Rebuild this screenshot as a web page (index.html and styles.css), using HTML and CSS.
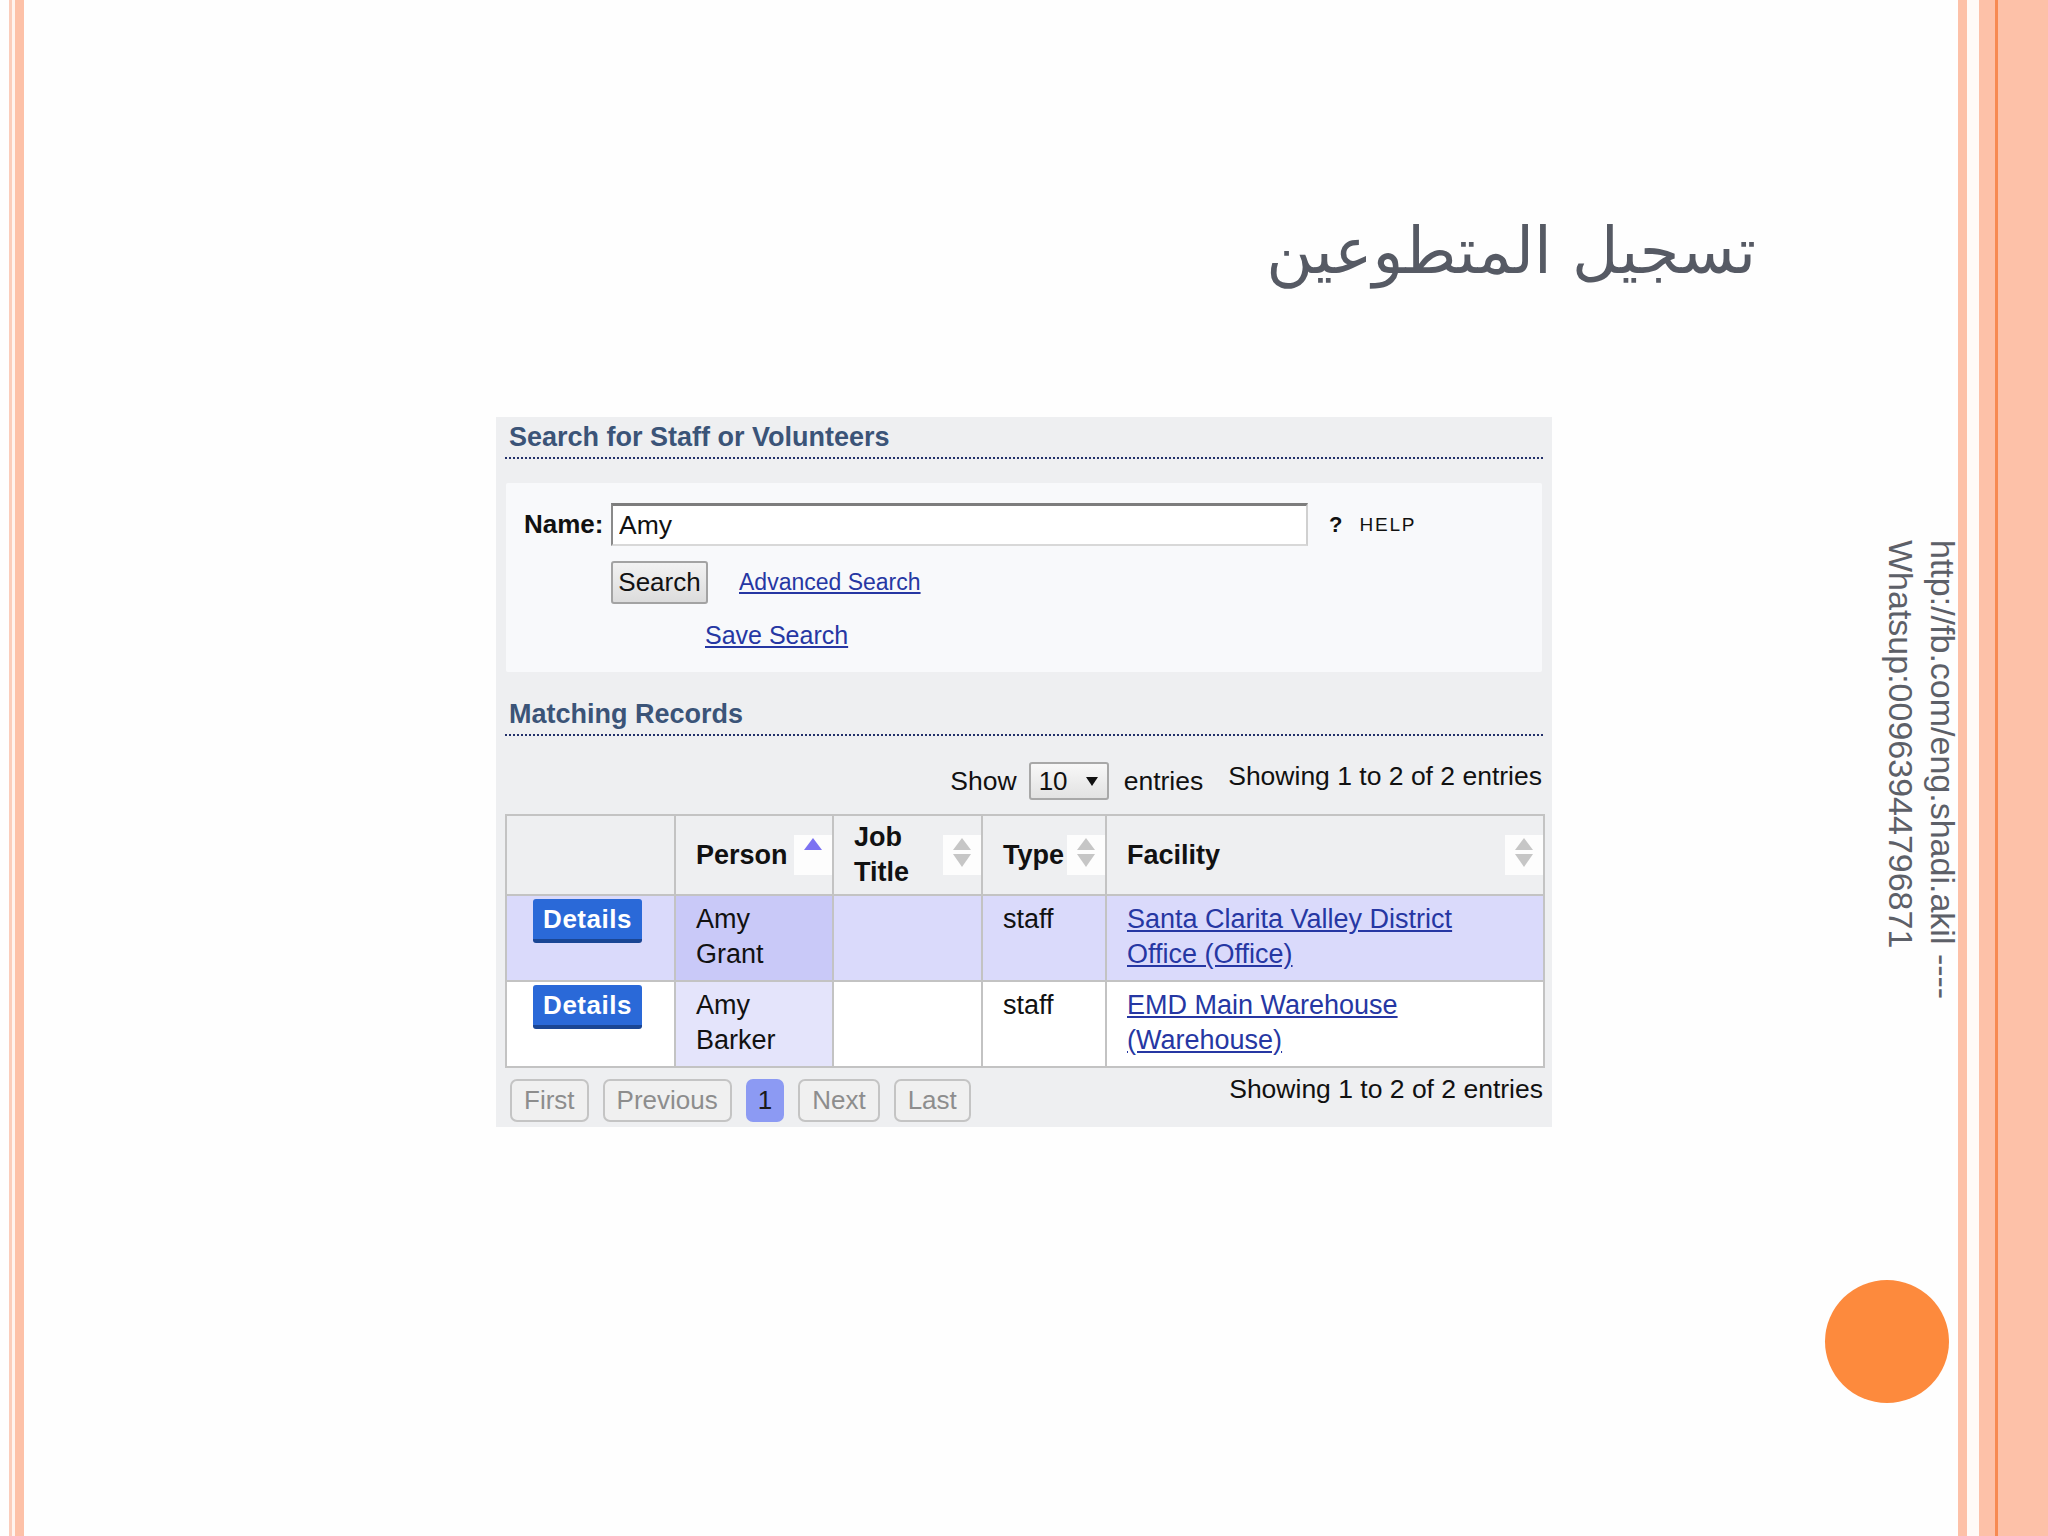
FILE: index.html
```html
<!DOCTYPE html>
<html lang="en">
<head>
<meta charset="utf-8">
<title>تسجيل المتطوعين</title>
<link rel="stylesheet" href="styles.css">
</head>
<body>
<div class="slide">
  <div class="deco-left"></div>
  <main class="content">
    <h1 class="title" dir="rtl" lang="ar">تسجيل المتطوعين</h1>
    <section class="panel">
      <h2 class="sec-head">Search for Staff or Volunteers</h2>
      <div class="search-box">
        <div class="row-name">
          <label class="name-label" for="name">Name:</label>
          <input class="name-input" id="name" type="text" value="Amy">
          <span class="help"><b class="help-q">?</b><span class="help-t">HELP</span></span>
        </div>
        <div class="row-actions">
          <button class="btn-search" type="button">Search</button>
          <a class="link adv" href="#">Advanced Search</a>
        </div>
        <div class="row-save"><a class="link save" href="#">Save Search</a></div>
      </div>

      <h2 class="sec-head">Matching Records</h2>
      <div class="table-tools">
        <span class="show-label">Show</span>
        <span class="select">10 <svg class="caret" width="12" height="9" viewBox="0 0 12 9"><polygon points="0,0 12,0 6,9" fill="#111"/></svg></span>
        <span class="entries-label">entries</span>
        <span class="info info-top">Showing 1 to 2 of 2 entries</span>
      </div>

      <table class="records">
        <colgroup>
          <col class="c1"><col class="c2"><col class="c3"><col class="c4"><col class="c5">
        </colgroup>
        <thead>
          <tr>
            <th></th>
            <th><div class="th-in"><span class="th-text nowrap">Person</span><span class="sort"><svg width="20" height="32" viewBox="0 0 20 32"><polygon points="10,1 19,13 1,13" fill="#7c72f2"/></svg></span></div></th>
            <th><div class="th-in"><span class="th-text">Job Title</span><span class="sort"><svg width="20" height="32" viewBox="0 0 20 32"><polygon points="10,1 19,13 1,13" fill="#c6c6c6"/><polygon points="1,17 19,17 10,30" fill="#c6c6c6"/></svg></span></div></th>
            <th><div class="th-in"><span class="th-text nowrap">Type</span><span class="sort"><svg width="20" height="32" viewBox="0 0 20 32"><polygon points="10,1 19,13 1,13" fill="#c6c6c6"/><polygon points="1,17 19,17 10,30" fill="#c6c6c6"/></svg></span></div></th>
            <th><div class="th-in"><span class="th-text nowrap">Facility</span><span class="sort"><svg width="20" height="32" viewBox="0 0 20 32"><polygon points="10,1 19,13 1,13" fill="#c6c6c6"/><polygon points="1,17 19,17 10,30" fill="#c6c6c6"/></svg></span></div></th>
          </tr>
        </thead>
        <tbody>
          <tr class="r1">
            <td class="act"><span class="btn-details">Details</span></td>
            <td class="sorted">Amy Grant</td>
            <td></td>
            <td>staff</td>
            <td><a class="link" href="#">Santa Clarita Valley District Office (Office)</a></td>
          </tr>
          <tr class="r2">
            <td class="act"><span class="btn-details">Details</span></td>
            <td class="sorted">Amy Barker</td>
            <td></td>
            <td>staff</td>
            <td><a class="link" href="#">EMD Main Warehouse (Warehouse)</a></td>
          </tr>
        </tbody>
      </table>

      <div class="pager">
        <span class="pg">First</span>
        <span class="pg">Previous</span>
        <span class="pg current">1</span>
        <span class="pg">Next</span>
        <span class="pg">Last</span>
        <span class="info info-bottom">Showing 1 to 2 of 2 entries</span>
      </div>
    </section>
  </main>
  <div class="deco-right"></div>
</div>
<div class="side-note">http://fb.com/eng.shadi.akil ----<br>Whatsup:00963944796871</div>
<div class="dot"></div>
</body>
</html>
```
FILE: styles.css
```css
html, body {
  margin: 0;
  padding: 0;
}
body {
  width: 2048px;
  height: 1536px;
  background: #fefefe;
  font-family: "Liberation Sans", Arial, sans-serif;
  overflow: hidden;
  position: relative;
}
.slide {
  display: flex;
  width: 2048px;
  height: 1536px;
}
.deco-left {
  width: 24px;
  flex: none;
  background: linear-gradient(to right,
    #fefefe 0 9px,
    #fbcdbb 9px 12px,
    #fff3ee 12px 15px,
    #fdc1a8 15px 24px);
}
.deco-right {
  width: 90px;
  flex: none;
  background: linear-gradient(to right,
    #fdc1a8 0 9px,
    #fffaf7 9px 21px,
    #fdc1a8 21px 37px,
    #f78a52 37px 40px,
    #fdc1a8 40px 90px);
}
.content {
  flex: 1;
  min-width: 0;
}
.title {
  margin: 0;
  height: 417px;
  box-sizing: border-box;
  padding: 206px 202px 0 0;
  text-align: right;
  font-family: "DejaVu Sans", "Noto Sans", sans-serif;
  font-weight: normal;
  font-size: 64px;
  line-height: 90px;
  color: #565a64;
}

/* ---------- panel ---------- */
.panel {
  margin-left: 472px;
  width: 1056px;
  box-sizing: border-box;
  background: #eeeff1;
  padding: 0 9px 5px 9px;
}
.sec-head {
  margin: 0;
  padding: 4px 0 4px 4px;
  font-size: 27px;
  line-height: 32px;
  font-weight: bold;
  color: #3b5478;
  border-bottom: 2px dotted #22306a;
}
.search-box {
  margin: 24px 1px 0 1px;
  background: #f8f9fb;
  border-radius: 2px;
  padding: 20px 0 19px 18px;
}
.row-name {
  display: flex;
  align-items: center;
}
.name-label {
  font-weight: bold;
  font-size: 26px;
  color: #111;
  width: 87px;
}
.name-input {
  width: 697px;
  height: 43px;
  box-sizing: border-box;
  margin: 0;
  border-style: solid;
  border-width: 3px 2px 2px 2px;
  border-color: #7d7d7d #d0d0d0 #d8d8d8 #8a8a8a;
  background: #fff;
  padding: 0 6px;
  font-family: "Liberation Sans", Arial, sans-serif;
  font-size: 26.5px;
  color: #111;
  outline: none;
}
.help {
  margin-left: 21px;
  display: flex;
  align-items: center;
  color: #111;
}
.help-q {
  font-size: 22px;
  font-weight: bold;
}
.help-t {
  margin-left: 17px;
  font-size: 19px;
  letter-spacing: 1.8px;
}
.row-actions {
  display: flex;
  align-items: center;
  margin-top: 15px;
  padding-left: 87px;
}
.btn-search {
  width: 97px;
  height: 43px;
  box-sizing: border-box;
  border: 2px solid #a3a3a3;
  border-radius: 3px;
  background: linear-gradient(#f2f2f2, #dcdcdc);
  font-family: "Liberation Sans", Arial, sans-serif;
  font-size: 26px;
  color: #111;
  padding: 0;
}
.link {
  color: #2637a3;
  text-decoration: underline;
}
.adv {
  margin-left: 31px;
  font-size: 23px;
}
.row-save {
  margin-top: 17px;
  padding-left: 181px;
  line-height: 28px;
}
.save {
  font-size: 25px;
}

/* ---------- table tools ---------- */
.search-box + .sec-head {
  margin-top: 22px;
}
.table-tools {
  display: flex;
  align-items: center;
  justify-content: flex-end;
  margin-top: 26px;
  padding-right: 1px;
  font-size: 26.5px;
  color: #111;
}
.select {
  margin-left: 12px;
  width: 80px;
  height: 38px;
  box-sizing: border-box;
  border: 2px solid #a8a8a8;
  border-radius: 3px;
  background: linear-gradient(#f8f8f8, #e2e2e2);
  display: flex;
  align-items: center;
  padding-left: 8px;
  font-size: 26px;
}
.caret {
  margin-left: 18px;
}
.entries-label {
  margin-left: 15px;
}
.info {
  font-size: 26.5px;
  color: #111;
  line-height: 28px;
  align-self: flex-start;
}
.info-top {
  margin-left: 25px;
}

/* ---------- table ---------- */
.records {
  margin-top: 14px;
  width: 1038px;
  table-layout: fixed;
  border-collapse: collapse;
  border: 2px solid #c3c3c3;
  font-size: 27px;
  color: #111;
}
.c1 { width: 169px; }
.c2 { width: 158px; }
.c3 { width: 149px; }
.c4 { width: 124px; }
.c5 { width: 438px; }
.records th {
  height: 78px;
  padding: 0 0 0 20px;
  border: 2px solid #c3c3c3;
  background: #eeeff1;
  text-align: left;
  vertical-align: middle;
  font-weight: bold;
  line-height: 35px;
}
.th-in {
  display: flex;
  align-items: center;
  justify-content: space-between;
}
.th-text {
  flex: 1;
  min-width: 0;
}
.nowrap {
  white-space: nowrap;
}
.sort {
  flex: none;
  width: 38px;
  height: 40px;
  background: #fdfdfd;
  display: flex;
  align-items: flex-start;
  justify-content: center;
  padding-top: 2px;
  box-sizing: border-box;
}
.records td {
  padding: 6px 20px 8px 20px;
  border: 2px solid #c3c3c3;
  border-top: none;
  vertical-align: top;
  line-height: 35px;
}
.r1 td { background: #dadafb; }
.r1 td.sorted { background: #c9c9f8; }
.r2 td { background: #ffffff; }
.r2 td.sorted { background: #e4e4fb; }
.records td.act {
  padding: 3px 0 0 0;
  text-align: center;
}
.btn-details {
  display: inline-block;
  width: 109px;
  height: 44px;
  box-sizing: border-box;
  background: #2a69d8;
  border-bottom: 4px solid #1a4694;
  border-radius: 3px;
  color: #fff;
  font-size: 26px;
  font-weight: bold;
  line-height: 40px;
  letter-spacing: 0.5px;
  margin-right: 6px;
}

/* ---------- pager ---------- */
.pager {
  display: flex;
  align-items: flex-start;
  gap: 14px;
  margin-top: 11px;
  padding-left: 5px;
}
.pg {
  height: 43px;
  box-sizing: border-box;
  border: 2px solid #c4c4c4;
  border-radius: 7px;
  background: #f0f0f0;
  color: #8d8d8d;
  font-size: 26px;
  line-height: 39px;
  padding: 0 12px;
}
.pg.current {
  background: #8c9af3;
  border-color: #8c9af3;
  color: #1a1a1a;
  padding: 0 10px;
}
.info-bottom {
  margin-left: auto;
  margin-top: -4px;
}

/* ---------- overlays ---------- */
.side-note {
  position: absolute;
  left: 1880px;
  top: 540px;
  width: 84px;
  writing-mode: vertical-rl;
  font-family: "Liberation Sans", Arial, sans-serif;
  font-size: 34px;
  line-height: 42px;
  color: #5d6068;
  white-space: nowrap;
}
.dot {
  position: absolute;
  left: 1825px;
  top: 1280px;
  width: 124px;
  height: 123px;
  border-radius: 50%;
  background: #fd8a3d;
}
```
